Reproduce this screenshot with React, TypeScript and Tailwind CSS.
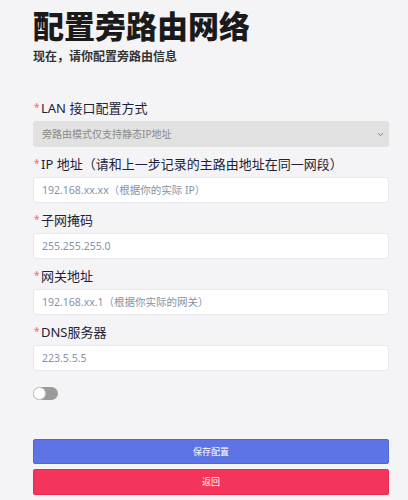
import { ChevronDown } from "lucide-react";

const font = { fontFamily: '"Noto Sans", "Noto Sans CJK SC", sans-serif' };

function Label({ text }: { text: string }) {
  return (
    <div className="flex items-center h-[20px] mb-[3px] text-[13px] leading-[20px] text-[#1e2238]">
      <span className="text-[#f56c6c] w-[8px] pl-[1px] text-[10px] leading-[12px] self-start mt-[3px]">*</span>
      <span>{text}</span>
    </div>
  );
}

function Field({ label, placeholder }: { label: string; placeholder: string }) {
  return (
    <div>
      <Label text={label} />
      <input
        className="block w-full h-[26px] bg-white border border-[#e8e9ee] rounded-[3px] px-[8px] text-[10.5px] text-[#8492a6] placeholder:text-[#8492a6] outline-none"
        placeholder={placeholder}
      />
    </div>
  );
}

export default function App() {
  return (
    <div className="min-h-[500px] w-full bg-[#f4f4f6]" style={font}>
      <div className="pl-[33px] pr-[19px]">
        <h1 className="h-[48px] pt-[8px] text-[31px] leading-[36px] font-extrabold text-[#1a1a1a]">配置旁路由网络</h1>
        <p className="h-[18px] text-[12px] leading-[18px] font-bold text-[#333]">现在，请你配置旁路由信息</p>

        <div className="mt-[32px] flex flex-col gap-[7px]">
          <div>
            <Label text="LAN 接口配置方式" />
            <div className="relative">
              <select
                disabled
                className="block appearance-none w-full h-[26px] bg-[#e1e1e1] rounded-[3px] pl-[9px] text-[10px] text-[#8a8a8a]"
              >
                <option>旁路由模式仅支持静态IP地址</option>
              </select>
              <ChevronDown className="absolute right-[4px] top-[9px] w-[9px] h-[9px] text-[#666]" strokeWidth={2} />
            </div>
          </div>
          <Field label="IP 地址（请和上一步记录的主路由地址在同一网段）" placeholder="192.168.xx.xx（根据你的实际 IP）" />
          <Field label="子网掩码" placeholder="255.255.255.0" />
          <Field label="网关地址" placeholder="192.168.xx.1（根据你实际的网关）" />
          <Field label="DNS服务器" placeholder="223.5.5.5" />
        </div>

        <div className="mt-[16px] h-[14px] flex">
          <div className="w-[25px] h-[13px] rounded-full bg-[#9b9b9b] flex items-center">
            <div className="w-[13px] h-[13px] rounded-full bg-white border border-[#c8c8c8]" />
          </div>
        </div>

        <div className="mt-[38px] flex flex-col gap-[5px] pb-[5px]">
          <button className="w-full h-[25px] rounded-[2px] bg-[#5e73e4] border border-[#4f66df] text-white text-[9px]">
            保存配置
          </button>
          <button className="w-full h-[26px] rounded-[2px] bg-[#f5345c] border border-[#ea2b52] text-white text-[9px]">
            返回
          </button>
        </div>
      </div>
    </div>
  );
}
